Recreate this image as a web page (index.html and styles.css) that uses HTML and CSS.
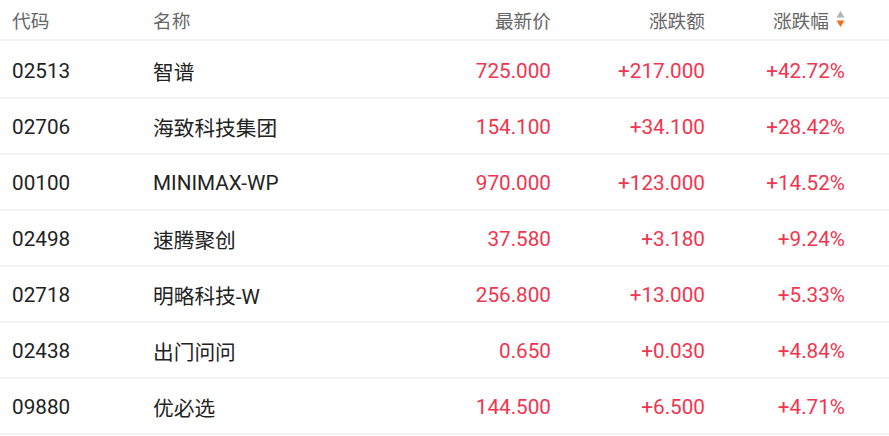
FILE: index.html
```html
<!DOCTYPE html>
<html lang="zh">
<head>
<meta charset="utf-8">
<link rel="stylesheet" href="styles.css">
</head>
<body>
<div class="table">
  <div class="row head">
    <div class="c code">代码</div>
    <div class="c name">名称</div>
    <div class="c num">最新价</div>
    <div class="c num">涨跌额</div>
    <div class="c num sort">涨跌幅<span class="sorter"><svg width="9" height="17" viewBox="0 0 9 17"><polygon points="4.5,0 8.5,6.5 0.5,6.5" fill="#b3b3b3"/><polygon points="0.5,9.5 8.5,9.5 4.5,16" fill="#f5701e"/></svg></span></div>
  </div>
  <div class="row">
    <div class="c code">02513</div><div class="c name">智谱</div>
    <div class="c num up">725.000</div><div class="c num up">+217.000</div><div class="c num up pct">+42.72%</div>
  </div>
  <div class="row">
    <div class="c code">02706</div><div class="c name">海致科技集团</div>
    <div class="c num up">154.100</div><div class="c num up">+34.100</div><div class="c num up pct">+28.42%</div>
  </div>
  <div class="row">
    <div class="c code">00100</div><div class="c name">MINIMAX-WP</div>
    <div class="c num up">970.000</div><div class="c num up">+123.000</div><div class="c num up pct">+14.52%</div>
  </div>
  <div class="row">
    <div class="c code">02498</div><div class="c name">速腾聚创</div>
    <div class="c num up">37.580</div><div class="c num up">+3.180</div><div class="c num up pct">+9.24%</div>
  </div>
  <div class="row">
    <div class="c code">02718</div><div class="c name">明略科技-W</div>
    <div class="c num up">256.800</div><div class="c num up">+13.000</div><div class="c num up pct">+5.33%</div>
  </div>
  <div class="row">
    <div class="c code">02438</div><div class="c name">出门问问</div>
    <div class="c num up">0.650</div><div class="c num up">+0.030</div><div class="c num up pct">+4.84%</div>
  </div>
  <div class="row">
    <div class="c code">09880</div><div class="c name">优必选</div>
    <div class="c num up">144.500</div><div class="c num up">+6.500</div><div class="c num up pct">+4.71%</div>
  </div>
</div>
</body>
</html>
```

FILE: styles.css
```css
html, body {
  margin: 0;
  padding: 0;
  background: #fff;
}
body {
  font-family: Roboto, "Noto Sans CJK SC", sans-serif;
  color: #222;
}
.table {
  width: 889px;
}
.row {
  display: grid;
  grid-template-columns: 141px 1fr 150px 154px 140px;
  padding: 2px 44px 0 12px;
  height: 56px;
  box-sizing: border-box;
  border-bottom: 2px solid #f3f3f3;
  align-items: center;
  font-size: 20.7px;
}
.row.head {
  height: 41px;
  padding-top: 0;
  font-size: 18.7px;
  color: #666;
}
.head + .row {
  height: 58px;
  padding-top: 3px;
}
.c {
  white-space: nowrap;
}
.num {
  text-align: right;
}
.up {
  color: #f0354f;
}
.sort {
  display: flex;
  justify-content: flex-end;
  align-items: center;
  gap: 7px;
}
.sorter {
  display: flex;
}
```
